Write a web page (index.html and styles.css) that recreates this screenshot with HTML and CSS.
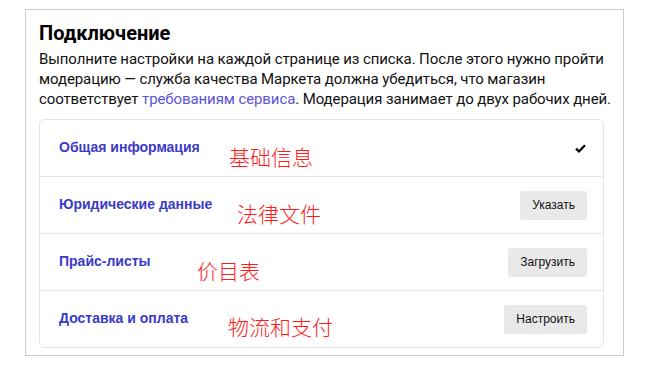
FILE: index.html
```html
<!DOCTYPE html>
<html>
<head>
    <meta charset="UTF-8">
    <meta name="viewport" content="width=device-width, initial-scale=1.0">
    <title>Подключение</title>
    <link rel="stylesheet" href="styles.css">
</head>
<body>
    <div class="panel">
        <h2 class="panel-title">Подключение</h2>
        <p class="panel-text">
            Выполните настройки на каждой странице из списка. После этого нужно пройти<br>
            модерацию — служба качества Маркета должна убедиться, что магазин<br>
            соответствует <a href="#">требованиям сервиса</a>. Модерация занимает до двух рабочих дней.
        </p>

        <div class="steps">
            <div class="step">
                <span class="step-name">Общая информация</span>
                <svg class="check" width="11" height="9" viewBox="0 0 11 9">
                    <path d="M1 4.6 L4 7.4 L10 1.2" fill="none" stroke="#000" stroke-width="2.2"/>
                </svg>
            </div>
            <div class="step">
                <span class="step-name">Юридические данные</span>
                <button class="btn">Указать</button>
            </div>
            <div class="step">
                <span class="step-name">Прайс-листы</span>
                <button class="btn">Загрузить</button>
            </div>
            <div class="step">
                <span class="step-name">Доставка и оплата</span>
                <button class="btn">Настроить</button>
            </div>
        </div>

        <span class="note note-1">基础信息</span>
        <span class="note note-2">法律文件</span>
        <span class="note note-3">价目表</span>
        <span class="note note-4">物流和支付</span>
    </div>
</body>
</html>
```

FILE: styles.css
```css
/* страница подключения */
body {
    margin: 0;
    padding: 0;
    background-color: #fff;
    font-family: Roboto, "Liberation Sans", sans-serif;
    color: #000;
}

.panel {
    position: relative;
    margin: 9px 0 0 25px;
    width: 599px;
    height: 347px;
    box-sizing: border-box;
    border: 1px solid #cccccc;
    padding: 12px 19px 0 13px;
}

.panel-title {
    margin: 0;
    font-size: 20px;
    font-weight: bold;
    line-height: 22px;
}

.panel-text {
    margin: 5px 0 10px 0;
    font-size: 15px;
    letter-spacing: -0.1px;
    line-height: 20px;
    color: #111;
    white-space: nowrap;
}

.panel-text a {
    color: #5b54d8;
    text-decoration: none;
}

.steps {
    border: 1px solid #e6e6e6;
    border-radius: 5px;
}

.step {
    height: 56px;
    display: flex;
    align-items: center;
    justify-content: space-between;
    padding: 0 16px 0 19px;
    border-top: 1px solid #e8e8e8;
}

.step:first-child {
    border-top: none;
}

.step-name {
    margin-bottom: 3px;
    font-family: "Liberation Sans", Arial, sans-serif;
    font-size: 14px;
    font-weight: bold;
    color: #3a3acb;
}

.check {
    margin-right: 1px;
}

.btn {
    font-family: "Liberation Sans", Arial, sans-serif;
    font-size: 12px;
    color: #111;
    background-color: #e9e9e9;
    border: none;
    border-radius: 3px;
    height: 29px;
    padding: 0 12px;
}

/* красные подписи поверх списка */
.note {
    position: absolute;
    font-family: "Noto Sans CJK SC", sans-serif;
    font-weight: 300;
    font-size: 21px;
    line-height: 21px;
    color: #ff1a1a;
}

.note-1 { left: 203px; top: 136px; }
.note-2 { left: 211px; top: 193px; }
.note-3 { left: 171px; top: 250px; }
.note-4 { left: 202px; top: 306px; }
```
